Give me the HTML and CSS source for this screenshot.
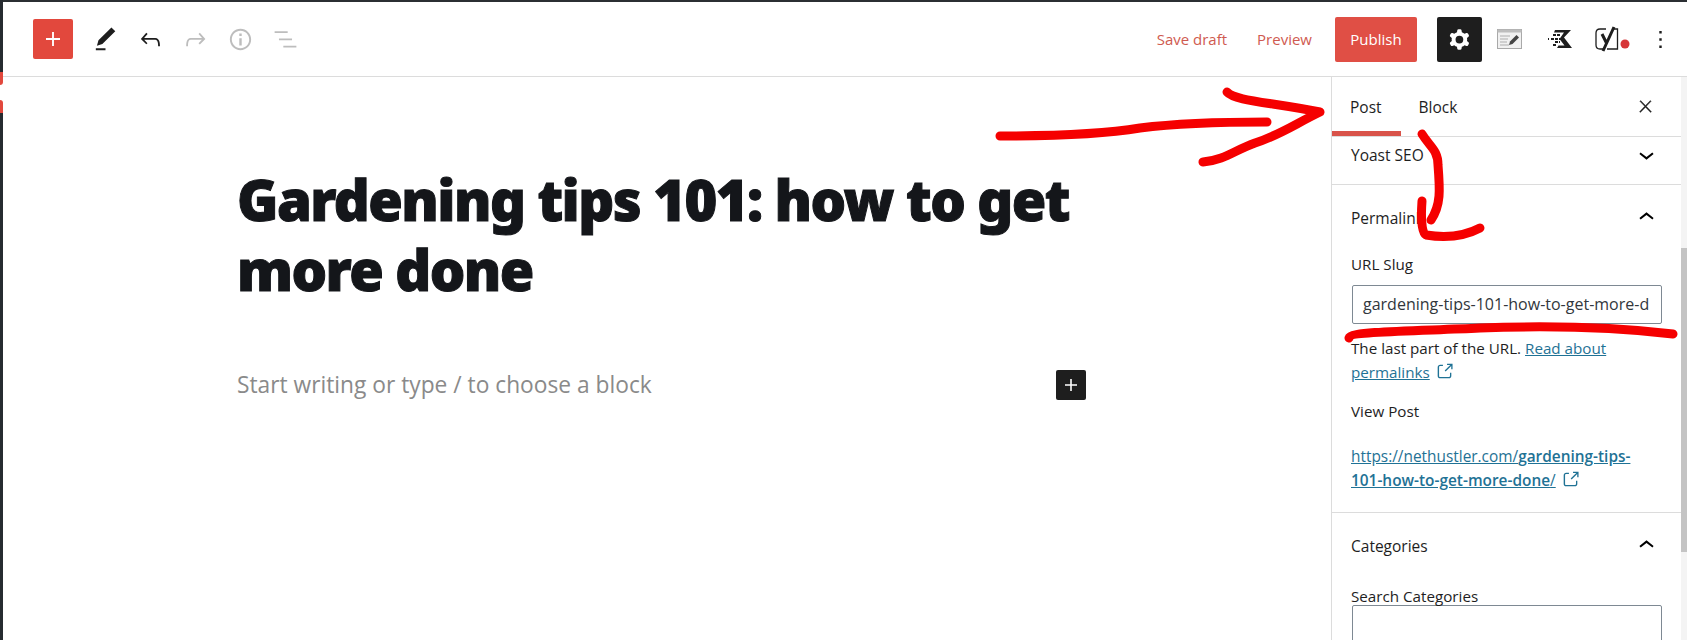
FILE: index.html
```html
<!DOCTYPE html>
<html lang="en">
<head>
    <meta charset="UTF-8">
    <title>Gardening tips 101</title>
    <link rel="stylesheet" href="styles.css">
</head>
<body>
    <div class="admin-edge">
        <div class="edge-dark edge-top"></div>
        <div class="edge-red edge-red-a"></div>
        <div class="edge-gap"></div>
        <div class="edge-red edge-red-b"></div>
        <div class="edge-dark edge-bottom"></div>
    </div>

    <div class="editor">
        <header class="toolbar">
            <div class="toolbar-left">
                <button class="add-btn"><svg viewBox="0 0 24 24" width="28" height="28"><path d="M18 11.2h-5.2V6h-1.6v5.2H6v1.6h5.2V18h1.6v-5.2H18z"/></svg></button>
                <span class="tool"><svg viewBox="0 0 24 24" width="29" height="29"><path d="M20.1 5.1L16.9 2 6.2 12.7l-1.3 4.4 4.5-1.3L20.1 5.1zM4 20.8h8v-1.5H4v1.5z"/></svg></span>
                <span class="tool"><svg viewBox="0 0 24 24" width="29" height="29"><path d="M18.3 11.7c-.6-.6-1.4-.9-2.3-.9H6.7l2.9-3.3-1.1-1-4.5 5L8.5 16l1-1-2.7-2.7H16c.5 0 .9.2 1.3.5 1 1 1 3.4 1 4.5v.3h1.5v-.2c0-1.5 0-4.3-1.5-5.7z"/></svg></span>
                <span class="tool disabled"><svg viewBox="0 0 24 24" width="29" height="29"><path d="M15.6 6.5l-1.1 1 2.9 3.3H8c-.9 0-1.7.3-2.3.9-1.4 1.5-1.4 4.2-1.4 5.6v.2h1.5v-.3c0-1.1 0-3.5 1-4.5.3-.3.7-.5 1.3-.5h9.2L14.5 15l1.1 1.1 4.6-4.6-4.6-5z"/></svg></span>
                <span class="tool disabled"><svg viewBox="0 0 24 24" width="29" height="29"><path d="M12 3.2c-4.8 0-8.8 3.9-8.8 8.8 0 4.8 3.9 8.8 8.8 8.8 4.8 0 8.8-3.9 8.8-8.8 0-4.8-4-8.8-8.8-8.8zm0 16c-4 0-7.2-3.3-7.2-7.2C4.8 8 8 4.8 12 4.8s7.2 3.3 7.2 7.2c0 4-3.2 7.2-7.2 7.2zM11 17h2v-6h-2v6zm0-8h2V7h-2v2z"/></svg></span>
                <span class="tool disabled"><svg viewBox="0 0 24 24" width="29" height="29"><path d="M13.8 5.2H3v1.5h10.8V5.2zm-3.6 12v1.5H21v-1.5H10.2zm7.2-6H6.6v1.5h10.8v-1.5z"/></svg></span>
            </div>
            <div class="toolbar-right">
                <a class="link-btn save-draft">Save draft</a>
                <a class="link-btn preview">Preview</a>
                <button class="publish">Publish</button>
                <button class="settings-btn"><svg viewBox="0 0 24 24" width="31" height="31"><path fill-rule="evenodd" d="M10.289 4.836A1 1 0 0111.275 4h1.306a1 1 0 01.987.836l.244 1.466c.787.26 1.503.679 2.108 1.218l1.393-.522a1 1 0 011.216.437l.653 1.13a1 1 0 01-.23 1.273l-1.148.944a6.025 6.025 0 010 2.435l1.149.946a1 1 0 01.23 1.272l-.653 1.13a1 1 0 01-1.216.437l-1.394-.522c-.605.54-1.32.958-2.108 1.218l-.244 1.466a1 1 0 01-.987.836h-1.306a1 1 0 01-.986-.836l-.244-1.466a5.995 5.995 0 01-2.108-1.218l-1.394.522a1 1 0 01-1.217-.436l-.653-1.131a1 1 0 01.23-1.272l1.149-.946a6.026 6.026 0 010-2.435l-1.148-.944a1 1 0 01-.23-1.272l.653-1.131a1 1 0 011.217-.437l1.393.522a5.994 5.994 0 012.108-1.218l.244-1.466zM14.929 12a3 3 0 11-6 0 3 3 0 016 0z"/></svg></button>
                <span class="plugin-icon note-icon">
                    <svg viewBox="0 0 25 20" width="25" height="20">
                        <rect x="0.5" y="0.5" width="24" height="19" fill="#f1f1f1" stroke="#a9a9a9"/>
                        <rect x="0.5" y="0.5" width="24" height="3" fill="#bdbdbd"/>
                        <path d="M3 7h10M3 10h8M3 13h7M3 16h9" stroke="#c4c4c4" stroke-width="1.6"/>
                        <path d="M12 16l1-3.5 6.5-6.5 2.5 2.500-6.500 6.500z" fill="#444"/>
                    </svg>
                </span>
                <span class="plugin-icon speed-icon">
                    <svg viewBox="0 0 25 20" width="25" height="20">
                        <path d="M8 1h16l-7 7.500 8 10.500H10l1.500-2.600h6L12.500 10 17 3.600H7z" fill="#1e1e1e"/>
                        <path d="M6 6h7M1 10h1M4 10h9M8 13h5M6 16h3" stroke="#1e1e1e" stroke-width="2" stroke-dasharray="3 1"/>
                    </svg>
                </span>
                <span class="plugin-icon yoast-icon">
                    <svg viewBox="0 0 35 26" width="35" height="26">
                        <path d="M11 3H5Q1 3 1 7v12Q1 23 5 23H9M19 3h3.500v20H12" fill="none" stroke="#1e1e1e" stroke-width="1.300"/>
                        <path d="M7 8l5 10M19 1L8 25" fill="none" stroke="#1e1e1e" stroke-width="3"/>
                        <circle cx="30" cy="18" r="4.500" fill="#d63638"/>
                    </svg>
                </span>
                <span class="more"><svg viewBox="0 0 24 24" width="29" height="29"><path d="M13 19h-2v-2h2v2zm0-6h-2v-2h2v2zm0-6h-2V5h2v2z"/></svg></span>
            </div>
        </header>

        <div class="workspace">
            <main class="canvas">
                <div class="post-column">
                    <h1 class="post-title">Gardening tips 101: how to get more done</h1>
                    <div class="placeholder-row">
                        <p class="placeholder">Start writing or type / to choose a block</p>
                        <span class="inline-add"><svg viewBox="0 0 24 24" width="24" height="24"><path d="M18 11.2h-5.200V6h-1.600v5.200H6v1.600h5.200V18h1.600v-5.200H18z"/></svg></span>
                    </div>
                </div>
            </main>

            <aside class="sidebar">
                <div class="sidebar-inner">
                    <div class="tabs">
                        <span class="tab active">Post</span>
                        <span class="tab">Block</span>
                        <span class="close"><svg viewBox="0 0 24 24" width="19" height="19"><path d="M13 11.800l6.100-6.300-1-1-6.100 6.200-6.100-6.200-1 1 6.100 6.300-6.500 6.700 1 1 6.500-6.600 6.500 6.600 1-1z"/></svg></span>
                    </div>

                    <section class="panel panel-closed">
                        <div class="panel-head">
                            <span>Yoast SEO</span>
                            <svg viewBox="0 0 24 24" width="31" height="31"><path d="M17.500 11.600L12 16l-5.500-4.400.9-1.200L12 14l4.500-3.600 1 1.200z"/></svg>
                        </div>
                    </section>

                    <section class="panel panel-permalink">
                        <div class="panel-head">
                            <span>Permalink</span>
                            <svg viewBox="0 0 24 24" width="31" height="31"><path d="M6.500 12.400L12 8l5.500 4.400-.9 1.200L12 10l-4.500 3.600-1-1.200z"/></svg>
                        </div>
                        <label class="field-label">URL Slug</label>
                        <div class="text-input">gardening-tips-101-how-to-get-more-d</div>
                        <p class="help">The last part of the URL. <a href="#">Read about permalinks</a> <svg class="ext" viewBox="0 0 24 24" width="21" height="21"><path d="M18.200 17c0 .7-.6 1.200-1.200 1.200H7c-.7 0-1.200-.6-1.200-1.200V7c0-.7.6-1.200 1.200-1.200h3.200V4.200H7C5.500 4.200 4.200 5.500 4.200 7v10c0 1.500 1.200 2.800 2.800 2.800h10c1.500 0 2.800-1.200 2.800-2.800v-3.600h-1.500V17zM14.900 3v1.500h3.700l-6.400 6.400 1.100 1.100 6.400-6.400v3.700h1.500V3h-6.300z"/></svg></p>
                        <p class="view-post">View Post</p>
                        <p class="post-link"><a href="#">https://nethustler.com/<strong>gardening-tips-101-how-to-get-more-done</strong>/</a> <svg class="ext" viewBox="0 0 24 24" width="21" height="21"><path d="M18.200 17c0 .7-.6 1.200-1.200 1.200H7c-.7 0-1.200-.6-1.200-1.200V7c0-.7.6-1.200 1.200-1.200h3.200V4.200H7C5.500 4.200 4.200 5.500 4.200 7v10c0 1.500 1.200 2.800 2.800 2.800h10c1.500 0 2.800-1.200 2.800-2.800v-3.600h-1.500V17zM14.900 3v1.500h3.700l-6.400 6.400 1.100 1.100 6.400-6.400v3.700h1.500V3h-6.300z"/></svg></p>
                    </section>

                    <section class="panel panel-categories">
                        <div class="panel-head">
                            <span>Categories</span>
                            <svg viewBox="0 0 24 24" width="31" height="31"><path d="M6.500 12.400L12 8l5.500 4.400-.9 1.200L12 10l-4.500 3.600-1-1.200z"/></svg>
                        </div>
                        <label class="field-label search-label">Search Categories</label>
                        <div class="text-input search-input"></div>
                    </section>
                </div>
                <div class="scrollbar"><div class="scroll-thumb"></div></div>
            </aside>
        </div>
    </div>

    <!-- red marker scribbles drawn on top of the screenshot -->
    <svg class="scribbles" viewBox="0 0 1687 640" width="1687" height="640">
        <path d="M1000 136C1060 136 1110 133 1140 128C1180 123 1225 122 1267 122"/>
        <path d="M1227 92C1235 101 1270 102 1320 112C1295 124 1280 135 1255 143C1235 150 1225 160 1203 162"/>
        <path d="M1422 134C1430 147 1438 150 1438 165C1440 190 1441 205 1431 220"/>
        <path d="M1422 201C1421 215 1421 232 1426 235C1445 238 1465 236 1480 228"/>
        <path d="M1349 338C1351 331 1420 331 1480 328C1560 325 1630 329 1673 334"/>
    </svg>
</body>
</html>
```

FILE: styles.css
```css
* {
    box-sizing: border-box;
}
html, body {
    margin: 0;
    height: 640px;
    overflow: hidden;
}
body {
    display: flex;
    position: relative;
    background: #fff;
    color: #1e1e1e;
    font-family: "Open Sans", "Noto Sans", Arial, sans-serif;
    font-size: 15px;
}
svg {
    display: block;
}
a {
    color: #1f7295;
}

/* wp admin menu peeking out on the left */
.admin-edge {
    width: 3px;
    flex: none;
    display: flex;
    flex-direction: column;
}
.edge-dark {
    background: #262b30;
}
.edge-top {
    height: 72px;
}
.edge-red {
    background: #e2483d;
    height: 13px;
}
.edge-red-a {
    border-bottom-right-radius: 3px;
}
.edge-red-b {
    border-top-right-radius: 3px;
}
.edge-gap {
    height: 15px;
}
.edge-bottom {
    flex: 1;
}

.editor {
    flex: 1;
    min-width: 0;
    display: flex;
    flex-direction: column;
}

.toolbar {
    height: 77px;
    flex: none;
    display: flex;
    justify-content: space-between;
    align-items: center;
    border-top: 2px solid #2b2f33;
    border-bottom: 1px solid #dcdcdc;
    padding: 0 12px 0 30px;
}
.toolbar-left, .toolbar-right {
    display: flex;
    align-items: center;
}
.add-btn {
    width: 40px;
    height: 40px;
    padding: 0;
    border: 0;
    border-radius: 2px;
    background: #e2483d;
    display: flex;
    align-items: center;
    justify-content: center;
    fill: #fff;
    margin-right: 18px;
}
.tool {
    width: 29px;
    margin-right: 16px;
    fill: #1e1e1e;
}
.tool.disabled {
    fill: #bdbdbd;
}

.link-btn {
    color: #cf5a50;
    font-size: 15px;
}
.save-draft {
    margin-right: 30px;
}
.preview {
    margin-right: 23px;
}
.publish {
    width: 82px;
    height: 45px;
    border: 0;
    border-radius: 2px;
    padding: 0;
    background: #e04f45;
    color: #fff;
    font-family: inherit;
    font-size: 15px;
    font-weight: 500;
    margin-right: 20px;
}
.settings-btn {
    width: 45px;
    height: 45px;
    border: 0;
    border-radius: 2px;
    padding: 0;
    background: #1e1e1e;
    fill: #fff;
    display: flex;
    align-items: center;
    justify-content: center;
    margin-right: 15px;
}
.note-icon {
    margin-right: 25px;
}
.speed-icon {
    margin-right: 23px;
}
.yoast-icon {
    margin-right: 16px;
}
.more {
    fill: #1e1e1e;
}

.workspace {
    flex: 1;
    min-height: 0;
    display: flex;
}

.canvas {
    flex: 1;
    min-width: 0;
    padding: 87px 0 0 234px;
}
.post-column {
    width: 849px;
}
.post-title {
    margin: 0;
    font-family: "Noto Sans", Arial, sans-serif;
    font-size: 56px;
    font-weight: 900;
    line-height: 70px;
    letter-spacing: -1.55px;
    -webkit-text-stroke: 1px #14161a;
    color: #14161a;
}
.placeholder-row {
    margin-top: 65px;
    display: flex;
    align-items: center;
    justify-content: space-between;
}
.placeholder {
    margin: 0;
    font-size: 22.75px;
    color: #8a8a8a;
}
.inline-add {
    width: 30px;
    height: 30px;
    border-radius: 2px;
    background: #1e1e1e;
    fill: #fff;
    display: flex;
    align-items: center;
    justify-content: center;
}

.sidebar {
    width: 356px;
    flex: none;
    display: flex;
    border-left: 1px solid #dcdcdc;
}
.sidebar-inner {
    flex: 1;
    min-width: 0;
}
.scrollbar {
    width: 6px;
    flex: none;
    background: #f4f4f4;
    padding-top: 171px;
}
.scroll-thumb {
    height: 304px;
    background: #c4c4c4;
}

.tabs {
    height: 60px;
    display: flex;
    align-items: center;
    border-bottom: 1px solid #dcdcdc;
}
.tab {
    font-size: 15.5px;
    height: 100%;
    display: flex;
    align-items: center;
    padding: 0 19px 0 18px;
}
.tab.active {
    box-shadow: inset 0 -5px 0 #d9534a;
}
.close {
    margin-left: auto;
    margin-right: 26px;
    fill: #1e1e1e;
    stroke: #1e1e1e;
    stroke-width: 0.5;
}

.panel {
    padding: 0 19px;
    border-bottom: 1px solid #dcdcdc;
}
.panel-head {
    display: flex;
    align-items: center;
    justify-content: space-between;
    font-weight: 500;
    font-size: 15.5px;
}
.panel-closed {
    height: 48px;
    padding-top: 2px;
}
.panel-permalink {
    height: 328px;
    padding-top: 17px;
}
.panel-categories {
    border-bottom: 0;
    padding-top: 17px;
}
.field-label {
    display: block;
    margin-top: 20px;
    font-size: 15.2px;
    line-height: 22px;
}
.text-input {
    margin: 10px 0 0 1px;
    width: 310px;
    height: 39px;
    border: 1px solid #7e8993;
    border-radius: 2px;
    padding: 0 10px;
    line-height: 37px;
    font-size: 16px;
    white-space: nowrap;
    overflow: hidden;
    color: #32373c;
}
.help {
    margin: 12px 0 0;
    font-size: 15.2px;
    line-height: 24px;
}
.ext {
    display: inline-block;
    vertical-align: -4px;
    fill: #1f7295;
}
.view-post {
    margin: 15px 0 0;
    font-size: 15.2px;
    line-height: 24px;
}
.post-link {
    margin: 22px 0 0;
    max-width: 296px;
    font-size: 15.4px;
    line-height: 24px;
}
.post-link strong {
    font-weight: 600;
}
.search-label {
    margin-top: 24px;
}
.search-input {
    margin-top: -2px;
    height: 60px;
}

/* sits over everything, hand drawn */
.scribbles {
    position: absolute;
    left: 0;
    top: 0;
    pointer-events: none;
}
.scribbles path {
    fill: none;
    stroke: #f50000;
    stroke-width: 9;
    stroke-linecap: round;
    stroke-linejoin: round;
}
```
